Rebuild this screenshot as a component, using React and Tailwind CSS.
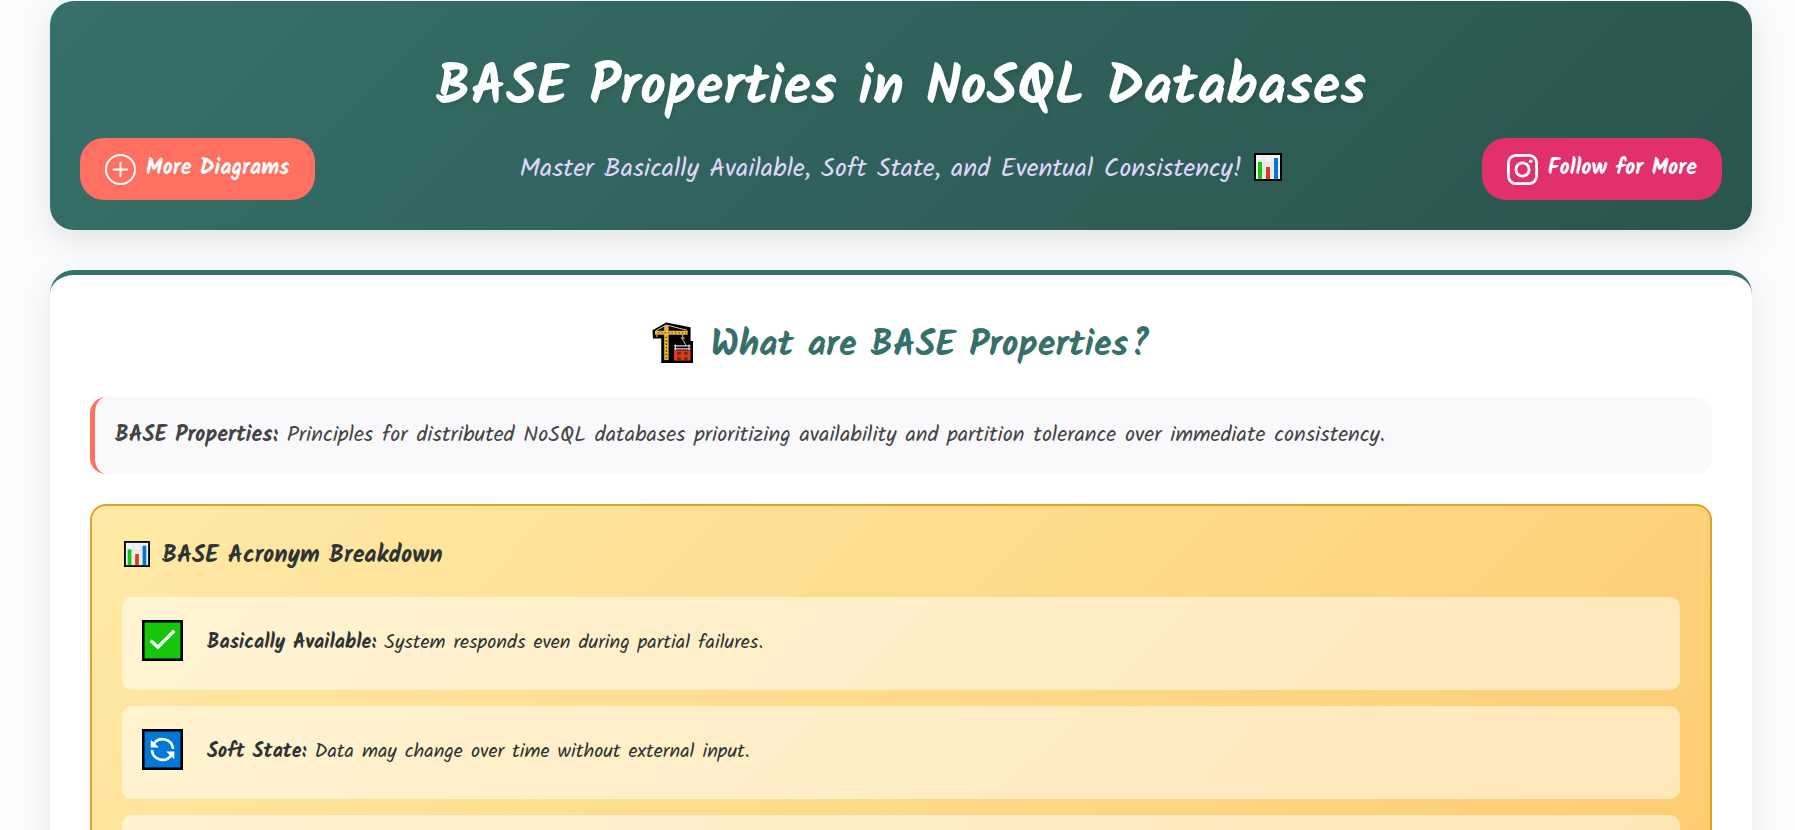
import React from "react";

const FONT = "font-['Kalam','Lato',sans-serif]";

function ChartIcon({ className }) {
  return (
    <svg viewBox="0 0 28 28" className={className} aria-hidden="true">
      <rect width="28" height="28" fill="#000" />
      <rect x="2" y="2" width="24" height="24" fill="#f2f2f2" />
      <path d="M10 2v24M18 2v24M2 10h24M2 18h24" stroke="#dcdcdc" strokeWidth="0.8" fill="none" />
      <rect x="4" y="9" width="4" height="17" fill="#16c60c" />
      <rect x="12" y="14" width="4" height="12" fill="#e03a1c" />
      <rect x="20" y="5" width="4" height="21" fill="#0078d7" />
    </svg>
  );
}

function CraneIcon({ className }) {
  return (
    <svg viewBox="0 0 42 42" className={className} aria-hidden="true">
      <path d="M0.500 8.500 14.500 0.500l25 5v14h2.500V42H9.500V17H1z" fill="#000" />
      <path d="M4 9 14.500 3l21.500 5.500" stroke="#e8e8e8" strokeWidth="0.900" fill="none" />
      <rect x="3" y="9" width="33.500" height="4" fill="#efbb35" />
      <rect x="12.500" y="3.500" width="4.500" height="35.500" fill="#efbb35" />
      <path d="M6 11h29" stroke="#4a3900" strokeWidth="1.200" strokeDasharray="1.500 2" />
      <path d="M14.750 15v23" stroke="#4a3900" strokeWidth="1.500" strokeDasharray="1.500 2" />
      <path d="M5 13v2.500M31.500 13v5M29.500 16.500h4M31.500 18l3.500 6" stroke="#cfcfcf" strokeWidth="1" fill="none" />
      <path d="M22.500 24.500h17M22.500 27.500h17M24 23v6M38 23v6" stroke="#d8d8d8" strokeWidth="1.200" fill="none" />
      <rect x="22.500" y="29" width="17" height="10.500" fill="#e03a1c" />
      <path d="M26 30.500h3.500v3H26zM33 30.500h3.500v3H33zM26 36h3.500v3.500H26zM33 36h3.500v3.500H33z" fill="#6b2a1a" />
    </svg>
  );
}

function CheckIcon({ className }) {
  return (
    <svg viewBox="0 0 40 40" className={className} aria-hidden="true">
      <rect width="40" height="40" fill="#000" />
      <rect x="2.500" y="2.500" width="35" height="35" fill="#16c60c" />
      <path d="M8.500 20 15.500 26.500 31.500 10.500" stroke="#fff" strokeWidth="3.200" fill="none" />
    </svg>
  );
}

function CycleIcon({ className }) {
  return (
    <svg viewBox="0 0 40 40" className={className} aria-hidden="true">
      <rect width="40" height="40" fill="#000" />
      <rect x="2.500" y="2.500" width="35" height="35" fill="#0078d7" />
      <path d="M11.500 14.500a10.300 10.300 0 0 1 18.800 5" stroke="#fff" strokeWidth="2.600" fill="none" />
      <path d="M28.500 25.500a10.300 10.300 0 0 1-18.800-5" stroke="#fff" strokeWidth="2.600" fill="none" />
      <path d="M8.500 10.500v7.500h8zM31.500 29.500V22h-8z" fill="#fff" />
    </svg>
  );
}

function PlusCircleIcon({ className }) {
  return (
    <svg viewBox="0 0 32 32" className={className} fill="none" stroke="#fff" strokeWidth="2" strokeLinecap="round" aria-hidden="true">
      <circle cx="16" cy="16" r="15" />
      <path d="M16 9v14M9 16h14" />
    </svg>
  );
}

function InstagramIcon({ className }) {
  return (
    <svg viewBox="0 0 32 32" className={className} fill="none" stroke="#fff" strokeWidth="2.900" aria-hidden="true">
      <rect x="1.450" y="1.450" width="29.100" height="29.100" rx="7.800" />
      <circle cx="16" cy="16" r="6.800" />
      <circle cx="24.500" cy="7.500" r="1.900" fill="#fff" stroke="none" />
    </svg>
  );
}

const properties = [
  { name: "Basically Available:", text: "System responds even during partial failures.", Icon: CheckIcon },
  { name: "Soft State:", text: "Data may change over time without external input.", Icon: CycleIcon },
];

export default function App() {
  return (
    <div className={`h-screen overflow-hidden bg-[#fafbfd] pt-px pr-[43px] pl-[50px] text-[#2d3436] ${FONT}`}>
      <header className="rounded-3xl bg-linear-135 from-[#36706a] to-[#2a544f] px-[30px] pt-[50px] pb-[30px] shadow-[0_10px_30px_rgba(0,0,0,0.1)]">
        <h1 className="text-center text-[56px] leading-[76px] font-bold text-white [text-shadow:2px_2px_4px_rgba(0,0,0,0.1)]">
          BASE Properties in NoSQL Databases
        </h1>
        <div className="mt-[11px] grid grid-cols-[1fr_auto_1fr] items-center">
          <a href="#diagrams" className="flex h-[62px] items-center gap-2.5 justify-self-start rounded-3xl bg-[#ff7062] px-[25px] text-[22px] leading-7 font-bold text-white">
            <PlusCircleIcon className="size-[31px]" />
            <span>More Diagrams</span>
          </a>
          <p className="flex items-center gap-3 pb-1 text-[26px] leading-9 text-[#e0d8fb]">
            <span className="pt-1">Master Basically Available, Soft State, and Eventual Consistency!</span>
            <ChartIcon className="size-7" />
          </p>
          <a href="#follow" className="flex h-[62px] items-center gap-2.5 justify-self-end rounded-3xl bg-[#e1306c] px-[25px] text-[22px] leading-7 font-bold text-white">
            <InstagramIcon className="size-[31px]" />
            <span>Follow for More</span>
          </a>
        </div>
      </header>

      <main className="mt-10 rounded-t-3xl border-t-[5px] border-[#36706a] bg-white px-10 pt-10 pb-10 shadow-[0_10px_30px_rgba(0,0,0,0.08)]">
        <h2 className="flex items-center justify-center gap-[18px] text-[36px] leading-[54px] font-bold text-[#36706a]">
          <CraneIcon className="size-[41px]" />
          <span className="pt-2 leading-[46px]">What are BASE Properties?</span>
        </h2>
        <p className="mt-7 rounded-2xl border-l-[5px] border-[#ff7062] bg-[#f9f9fb] px-5 pt-[21px] pb-5 text-[22px] leading-9 text-[#444]">
          <strong>BASE Properties:</strong> Principles for distributed NoSQL databases prioritizing availability and partition tolerance over immediate consistency.
        </p>

        <section className="mt-[30px] rounded-2xl border-2 border-[#e8a024] bg-linear-135 from-[#ffeaa7] to-[#fdcb6e] p-[30px]">
          <h3 className="flex items-center gap-3 text-2xl leading-9 font-bold">
            <ChartIcon className="ml-0.5 size-[26px]" />
            <span className="pt-1 leading-8">BASE Acronym Breakdown</span>
          </h3>
          <ul className="mt-[25px] flex flex-col gap-4">
            {properties.map(({ name, text, Icon }) => (
              <li key={name} className="flex h-[93px] items-center gap-6 rounded-[10px] bg-white/50 px-5 pb-1.5 text-xl leading-8">
                <Icon className="size-[41px]" />
                <span className="pt-1"><strong>{name}</strong> {text}</span>
              </li>
            ))}
            <li className="h-[93px] rounded-[10px] bg-white/50" aria-hidden="true" />
          </ul>
        </section>
      </main>
    </div>
  );
}
